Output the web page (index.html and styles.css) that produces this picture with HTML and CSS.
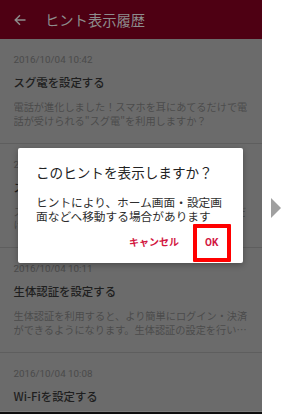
FILE: index.html
```html
<!DOCTYPE html>
<html lang="ja">
<head>
<meta charset="utf-8">
<title>ヒント表示履歴</title>
<link rel="stylesheet" href="styles.css">
</head>
<body>
<div class="stage">
  <div class="phone">
    <header class="appbar">
      <svg class="back" width="12" height="12" viewBox="0 0 12 12" aria-hidden="true">
        <path d="M11.5 6H1.2M6 1.2L1.2 6L6 10.8" fill="none" stroke="#8d8d8d" stroke-width="1.4"/>
      </svg>
      <h1 class="appbar-title">ヒント表示履歴</h1>
    </header>
    <ul class="list">
      <li class="item">
        <div class="date">2016/10/04 10:42</div>
        <div class="title">スグ電を設定する</div>
        <p class="desc">電話が進化しました！スマホを耳にあてるだけで電話が受けられる"スグ電"を利用しますか？</p>
      </li>
      <li class="item">
        <div class="date">2016/10/04 10:35</div>
        <div class="title">スマホの設定を確認する</div>
        <p class="desc">スマホの設定を確認して、より快適にご利用いただけるようにしましょう。</p>
      </li>
      <li class="item">
        <div class="date">2016/10/04 10:11</div>
        <div class="title">生体認証を設定する</div>
        <p class="desc">生体認証を利用すると、より簡単にログイン・決済ができるようになります。生体認証の設定を行いますか？</p>
      </li>
      <li class="item">
        <div class="date">2016/10/04 10:08</div>
        <div class="title">Wi-Fiを設定する</div>
        <p class="desc">Wi-Fiを設定すると、より快適に通信できるようになります。</p>
      </li>
    </ul>
    <div class="navbar"></div>
    <div class="dialog" role="dialog">
      <div class="dialog-title">このヒントを表示しますか？</div>
      <p class="dialog-body">ヒントにより、ホーム画面・設定画面などへ移動する場合があります</p>
      <div class="dialog-actions">
        <span class="btn">キャンセル</span>
        <span class="btn btn-ok is-highlighted">OK</span>
      </div>
    </div>
  </div>
  <div class="side">
    <span class="next"></span>
  </div>
</div>
</body>
</html>
```
FILE: styles.css
```css
* { box-sizing: border-box; }
html, body { margin: 0; padding: 0; background: #ffffff; }
body { font-family: Roboto, "Noto Sans CJK JP", sans-serif; }

.stage {
  display: flex;
  width: 288px;
  height: 414px;
}

.phone {
  position: relative;
  width: 262px;
  height: 414px;
  display: flex;
  flex-direction: column;
  background: #6b6b6b;
  overflow: hidden;
}

.appbar {
  height: 39px;
  flex: none;
  display: flex;
  align-items: center;
  padding-left: 14px;
  background: #4e0013;
}
.back { display: block; margin-right: 19px; }
.appbar-title {
  margin: 0;
  font-family: "Noto Sans CJK JP", sans-serif;
  font-size: 14.3px;
  font-weight: 400;
  line-height: 20px;
  color: #8d8d8d;
}

.list {
  flex: 1;
  margin: 0;
  padding: 0;
  list-style: none;
  overflow: hidden;
}
.item {
  padding: 15px 12px 15.5px 13.5px;
  border-bottom: 1px solid #5e5e5e;
}
.date {
  font-family: Roboto, sans-serif;
  font-size: 9.8px;
  line-height: 12px;
  color: #4a4a4a;
}
.title {
  margin-top: 8px;
  font-family: "Noto Sans CJK JP", Roboto, sans-serif;
  font-size: 11.4px;
  line-height: 16px;
  font-weight: 500;
  color: #1f1f1f;
}
.desc {
  margin: 10px 0 0;
  font-family: "Noto Sans CJK JP", sans-serif;
  font-size: 10.2px;
  line-height: 13.5px;
  color: #4b4b4b;
  display: -webkit-box;
  -webkit-line-clamp: 2;
  -webkit-box-orient: vertical;
  overflow: hidden;
}

.navbar {
  height: 3px;
  flex: none;
  border-top: 1px solid #7c7c7c;
  background: #0e0e0e;
}

.dialog {
  position: absolute;
  left: 18px;
  top: 148px;
  width: 225px;
  padding: 15px 12px 1px 18px;
  background: #ffffff;
  border-radius: 2px;
  box-shadow: 0 2px 6px rgba(0,0,0,0.3);
  font-family: "Noto Sans CJK JP", sans-serif;
}
.dialog-title {
  font-size: 13.6px;
  line-height: 18px;
  color: #222222;
}
.dialog-body {
  margin: 14px 0 0;
  font-size: 11.7px;
  line-height: 14px;
  color: #2e2e2e;
}
.dialog-actions {
  margin-top: 1px;
  display: flex;
  justify-content: flex-end;
  align-items: center;
  gap: 13.5px;
}
.btn {
  font-family: Roboto, "Noto Sans CJK JP", sans-serif;
  font-size: 10px;
  font-weight: 700;
  line-height: 14px;
  color: #d2163f;
}
.btn-ok {
  width: 38.5px;
  height: 37.5px;
  display: flex;
  align-items: center;
  justify-content: center;
}
.is-highlighted {
  border: 4.5px solid #ff0000;
  border-radius: 1px;
}

.side {
  flex: 1;
  display: flex;
  align-items: center;
  justify-content: center;
  padding-left: 2px;
}
.next {
  width: 0;
  height: 0;
  border-top: 10px solid transparent;
  border-bottom: 10px solid transparent;
  border-left: 10px solid #a0a0a0;
  margin-top: 2px;
}
```
